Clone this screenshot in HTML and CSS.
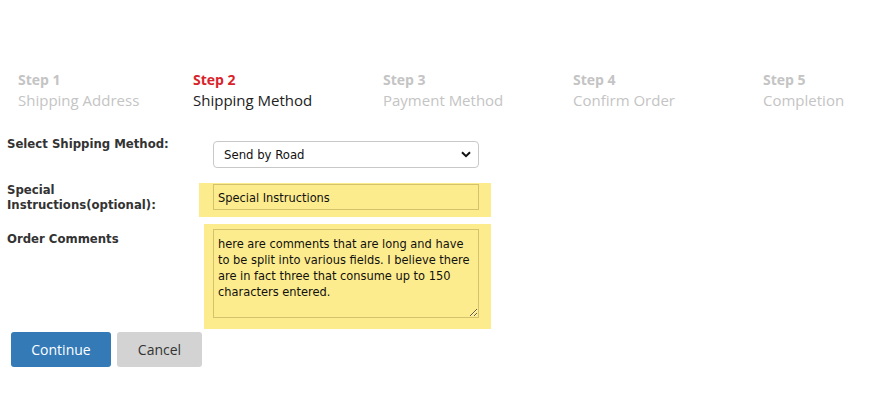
FILE: index.html
```html
<!DOCTYPE html>
<html lang="en">
<head>
    <meta charset="UTF-8">
    <title>Checkout - Shipping Method</title>
    <link rel="stylesheet" href="styles.css">
</head>
<body>
    <div class="steps">
        <div class="step">
            <span class="step-num">Step 1</span>
            <span class="step-name">Shipping Address</span>
        </div>
        <div class="step step-active">
            <span class="step-num">Step 2</span>
            <span class="step-name">Shipping Method</span>
        </div>
        <div class="step">
            <span class="step-num">Step 3</span>
            <span class="step-name">Payment Method</span>
        </div>
        <div class="step">
            <span class="step-num">Step 4</span>
            <span class="step-name">Confirm Order</span>
        </div>
        <div class="step">
            <span class="step-num">Step 5</span>
            <span class="step-name">Completion</span>
        </div>
    </div>

    <form class="ship-form">
        <div class="form-row row-method">
            <label class="form-label">Select Shipping Method:</label>
            <div class="form-field">
                <div class="select-box">
                    <select class="select-input">
                        <option>Send by Road</option>
                        <option>Send by Air</option>
                    </select>
                    <svg class="select-arrow" width="10" height="7" viewBox="0 0 10 7">
                        <path d="M1 1.2 L5 5.2 L9 1.2" fill="none" stroke="#111" stroke-width="2"/>
                    </svg>
                </div>
            </div>
        </div>

        <div class="form-row row-special">
            <label class="form-label label-special">Special Instructions(optional):</label>
            <div class="form-field field-hl field-special">
                <input class="text-input" type="text" value="Special Instructions">
            </div>
        </div>

        <div class="form-row row-comments">
            <label class="form-label label-comments">Order Comments</label>
            <div class="form-field field-hl field-comments">
                <textarea class="text-area">here are comments that are long and have to be split into various fields. I believe there are in fact three that consume up to 150 characters entered.</textarea>
            </div>
        </div>

        <div class="buttons">
            <button type="button" class="btn btn-continue">Continue</button>
            <button type="button" class="btn btn-cancel">Cancel</button>
        </div>
    </form>
</body>
</html>
```

FILE: styles.css
```css
body{
    margin: 0;
    background-color: #fff;
    font-family: "Open Sans", Arial, sans-serif;
}
.steps{
    display: grid;
    grid-template-columns: 175px 190px 190px 190px auto;
    padding: 70px 0 0 18px;
}
.step{
    display: flex;
    flex-direction: column;
}
.step-num{
    font-size: 14px;
    font-weight: bold;
    line-height: 20px;
    color: #c4c4c4;
}
.step-name{
    font-size: 15px;
    line-height: 21px;
    color: #c4c4c4;
}
.step-active .step-num{
    color: #d9232a;
}
.step-active .step-name{
    color: #222;
}

.ship-form{
    margin-top: 25px;
}
.form-row{
    display: flex;
    align-items: flex-start;
}
.form-label{
    box-sizing: border-box;
    width: 199px;
    padding: 0 30px 0 7px;
    font-family: "DejaVu Sans Condensed", "DejaVu Sans", sans-serif;
    font-size: 13px;
    font-weight: bold;
    line-height: 15px;
    color: #333;
}
.form-field{
    padding-left: 14px;
}
.row-method .form-field{
    padding-top: 5px;
}
.select-box{
    position: relative;
    width: 266px;
    height: 27px;
}
.select-input{
    appearance: none;
    width: 100%;
    height: 100%;
    box-sizing: border-box;
    border: 1px solid #c8c8c8;
    border-radius: 4px;
    background: #fff;
    padding: 0 0 0 10px;
    font-family: "DejaVu Sans Condensed", "DejaVu Sans", sans-serif;
    font-size: 13px;
    color: #111;
}
.select-arrow{
    position: absolute;
    right: 8px;
    top: 10px;
    pointer-events: none;
}

.row-special{
    margin-top: 15px;
}
.label-special{
    margin-top: -1px;
}
.field-hl{
    background-color: #fdec8e;
}
.field-special{
    padding: 1px 12px 7px 14px;
}
.text-input,
.text-area{
    width: 266px;
    box-sizing: border-box;
    border: 1px solid #d3c36c;
    background-color: #fdec8e;
    font-family: "DejaVu Sans Condensed", "DejaVu Sans", sans-serif;
    font-size: 12.7px;
    color: #111;
    margin: 0;
    display: block;
}
.text-input{
    height: 26px;
    padding: 0 4px;
}

.row-comments{
    margin-top: 7px;
}
.label-comments{
    padding-top: 7px;
}
.field-comments{
    margin-left: 5px;
    padding: 5px 12px 11px 9px;
}
.text-area{
    height: 89px;
    padding: 6px 3px 5px 4px;
    line-height: 16px;
    resize: vertical;
}

.buttons{
    display: flex;
    gap: 6px;
    padding-left: 11px;
    margin-top: 3px;
}
.btn{
    height: 35px;
    border: none;
    border-radius: 3px;
    font-family: "Open Sans", Arial, sans-serif;
    font-size: 14px;
    cursor: pointer;
}
.btn-continue{
    width: 100px;
    background-color: #337ab7;
    color: #fff;
}
.btn-cancel{
    width: 85px;
    background-color: #d3d3d3;
    color: #333;
}
```
